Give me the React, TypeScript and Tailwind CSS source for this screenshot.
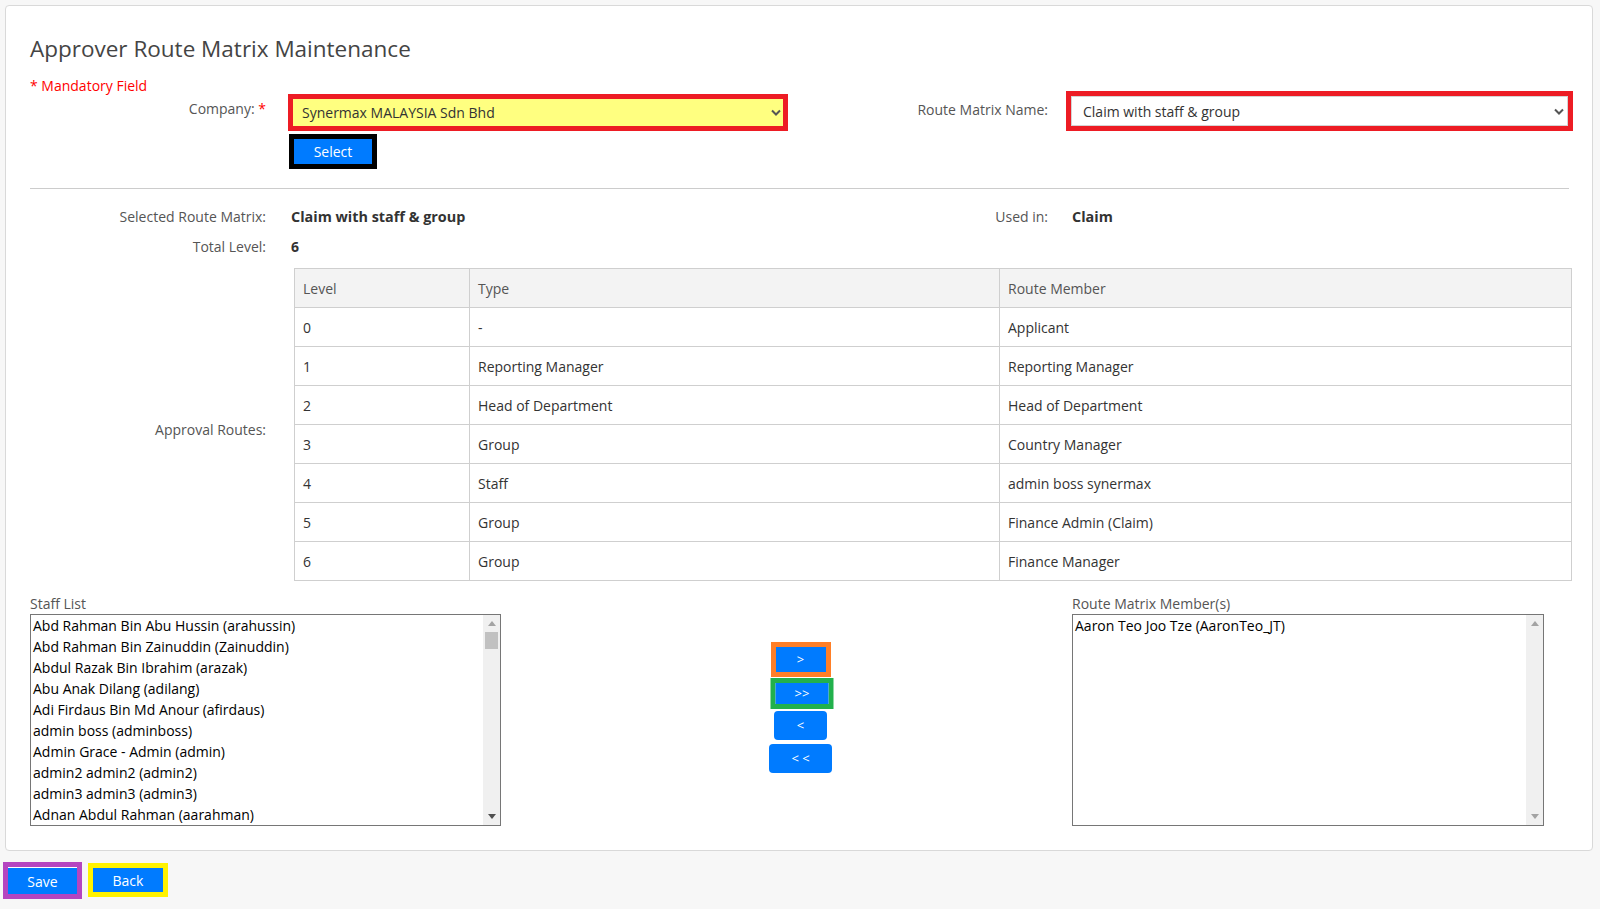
import React from 'react';

const staffList = [
  'Abd Rahman Bin Abu Hussin (arahussin)',
  'Abd Rahman Bin Zainuddin (Zainuddin)',
  'Abdul Razak Bin Ibrahim (arazak)',
  'Abu Anak Dilang (adilang)',
  'Adi Firdaus Bin Md Anour (afirdaus)',
  'admin boss (adminboss)',
  'Admin Grace - Admin (admin)',
  'admin2 admin2 (admin2)',
  'admin3 admin3 (admin3)',
  'Adnan Abdul Rahman (aarahman)',
];

const routes = [
  ['0', '-', 'Applicant'],
  ['1', 'Reporting Manager', 'Reporting Manager'],
  ['2', 'Head of Department', 'Head of Department'],
  ['3', 'Group', 'Country Manager'],
  ['4', 'Staff', 'admin boss synermax'],
  ['5', 'Group', 'Finance Admin (Claim)'],
  ['6', 'Group', 'Finance Manager'],
];

function Chevron() {
  return (
    <svg width="10" height="7" viewBox="0 0 10 7" className="shrink-0">
      <path d="M1 1.5L5 5.5L9 1.5" fill="none" stroke="#555" strokeWidth="2" />
    </svg>
  );
}

function ScrollBar({ thumb }: { thumb: boolean }) {
  return (
    <div className="flex w-[17px] shrink-0 flex-col items-center bg-[#f0f0f0]">
      <div className="flex h-[17px] items-center justify-center">
        <svg width="8" height="5" viewBox="0 0 8 5">
          <path d="M0 5L4 0L8 5Z" fill="#a3a3a3" />
        </svg>
      </div>
      {thumb && <div className="h-[17px] w-[13px] bg-[#c1c1c1]" />}
      <div className="flex-1" />
      <div className="flex h-[17px] items-center justify-center">
        <svg width="8" height="5" viewBox="0 0 8 5">
          <path d="M0 0L4 5L8 0Z" fill={thumb ? '#505050' : '#a3a3a3'} />
        </svg>
      </div>
    </div>
  );
}

function ListBox({ items, thumb }: { items: string[]; thumb: boolean }) {
  return (
    <div className="flex h-[212px] border border-[#767676] bg-white">
      <div className="flex-1 overflow-hidden pl-[2px] text-black">
        {items.map((s) => (
          <div key={s} className="h-[21px] whitespace-nowrap leading-[21px]">
            {s}
          </div>
        ))}
      </div>
      <ScrollBar thumb={thumb} />
    </div>
  );
}

export default function App() {
  return (
    <div
      className="min-h-[909px] bg-[#f7f7f7] pt-[5px] text-[14px] text-[#555]"
      style={{ fontFamily: '"Open Sans", "Noto Sans", sans-serif' }}
    >
      <div className="ml-[5px] mr-[7px] rounded-[4px] border border-[#d9d9d9] bg-white pb-[24px] pl-[24px] pr-[23px] pt-[28px]">
        <h1 className="text-[22.5px] leading-[29px] font-normal text-[#444]">Approver Route Matrix Maintenance</h1>
        <div className="mt-[17px] leading-[12px] text-[#ff0000]">* Mandatory Field</div>

        {/* company + route matrix name */}
        <div className="flex items-start">
          <div className="mt-[2px] flex w-[770px] shrink-0 items-start">
            <div className="w-[236px] shrink-0 pt-[3.5px] text-right leading-[21px]">
              Company: <span className="text-[#ff0000]">*</span>
            </div>
            <div className="ml-[22px] shrink-0">
              <div className="h-[37px] w-[500px] border-[5px] border-[#ed1c24]">
                <div className="flex h-full items-center justify-between bg-[#ffff80] pl-[9px] pr-[2px] text-[#333]">
                  <span>Synermax MALAYSIA Sdn Bhd</span>
                  <Chevron />
                </div>
              </div>
              <div className="ml-[1px] mt-[3px] inline-block border-[5px] border-black">
                <button className="flex h-[25px] w-[78px] items-center justify-center bg-[#007bff] text-white">
                  Select
                </button>
              </div>
            </div>
          </div>
          <div className="-mt-[1px] flex shrink-0 items-start">
            <div className="w-[248px] shrink-0 pt-[7.5px] text-right leading-[21px]">Route Matrix Name:</div>
            <div className="ml-[18px] h-[40px] w-[507px] shrink-0 border-[5px] border-[#ed1c24]">
              <div className="flex h-full items-center justify-between border border-[#d4d4d4] bg-white pl-[11px] pr-[3px] text-[#333]">
                <span>Claim with staff &amp; group</span>
                <Chevron />
              </div>
            </div>
          </div>
        </div>

        <div className="mt-[19px] border-t border-[#cccccc]" />

        {/* selected info */}
        <div className="mt-[17px] flex leading-[21px]">
          <div className="flex w-[770px] shrink-0">
            <div className="w-[236px] shrink-0 text-right">Selected Route Matrix:</div>
            <div className="ml-[25px] text-[14.4px] font-bold text-[#333]">Claim with staff &amp; group</div>
          </div>
          <div className="flex shrink-0">
            <div className="w-[248px] shrink-0 text-right">Used in:</div>
            <div className="ml-[24px] text-[14.4px] font-bold text-[#333]">Claim</div>
          </div>
        </div>
        <div className="mt-[9px] flex leading-[21px]">
          <div className="w-[236px] shrink-0 text-right">Total Level:</div>
          <div className="ml-[25px] font-bold text-[#333]">6</div>
        </div>

        {/* approval routes table */}
        <div className="mt-[11px] flex items-center">
          <div className="w-[236px] shrink-0 pt-[9px] text-right leading-[21px]">Approval Routes:</div>
          <table className="ml-[28px] w-[1277px] shrink-0 table-fixed border-collapse text-[#333]">
            <colgroup>
              <col className="w-[175px]" />
              <col className="w-[530px]" />
              <col className="w-[572px]" />
            </colgroup>
            <thead>
              <tr className="h-[39px] bg-[#f3f3f3] text-[#555]">
                <th className="border border-[#cfcfcf] pl-[8px] text-left font-normal">Level</th>
                <th className="border border-[#cfcfcf] pl-[8px] text-left font-normal">Type</th>
                <th className="border border-[#cfcfcf] pl-[8px] text-left font-normal">Route Member</th>
              </tr>
            </thead>
            <tbody>
              {routes.map((r) => (
                <tr key={r[0]} className="h-[39px]">
                  <td className="border border-[#cfcfcf] pl-[8px]">{r[0]}</td>
                  <td className="border border-[#cfcfcf] pl-[8px]">{r[1]}</td>
                  <td className="border border-[#cfcfcf] pl-[8px]">{r[2]}</td>
                </tr>
              ))}
            </tbody>
          </table>
        </div>

        {/* staff lists */}
        <div className="mt-[13px] flex items-start">
          <div className="w-[471px] shrink-0">
            <div className="leading-[20px]">Staff List</div>
            <ListBox items={staffList} thumb />
          </div>
          <div className="flex w-[571px] shrink-0 flex-col items-center pl-[28px] pt-[48px] text-[13px] text-white">
            <div className="border-[5px] border-[#ff7f27]">
              <button className="flex h-[25px] w-[50px] items-center justify-center bg-[#007bff]">&gt;</button>
            </div>
            <div className="mt-[1px] translate-x-[1.5px] border-[5px] border-[#22b14c]">
              <button className="flex h-[21px] w-[53px] items-center justify-center bg-[#007bff]">&gt;&gt;</button>
            </div>
            <button className="mt-[2px] flex h-[29px] w-[53px] items-center justify-center rounded-[4px] bg-[#007bff]">
              &lt;
            </button>
            <button className="mt-[4px] flex h-[29px] w-[63px] items-center justify-center rounded-[4px] bg-[#007bff]">
              &lt; &lt;
            </button>
          </div>
          <div className="w-[472px] shrink-0">
            <div className="leading-[20px]">Route Matrix Member(s)</div>
            <ListBox items={['Aaron Teo Joo Tze (AaronTeo_JT)']} thumb={false} />
          </div>
        </div>
      </div>

      {/* footer buttons */}
      <div className="mt-[11px] flex items-start pl-[3px]">
        <div className="border-[5px] border-[#b545c0]">
          <button className="flex h-[27px] w-[69px] items-center justify-center border-t border-white bg-[#007bff] text-white">
            Save
          </button>
        </div>
        <div className="ml-[6px] mt-[1px] border-[5px] border-[#fff200]">
          <button className="flex h-[24px] w-[70px] items-center justify-center bg-[#007bff] text-white">Back</button>
        </div>
      </div>
    </div>
  );
}
